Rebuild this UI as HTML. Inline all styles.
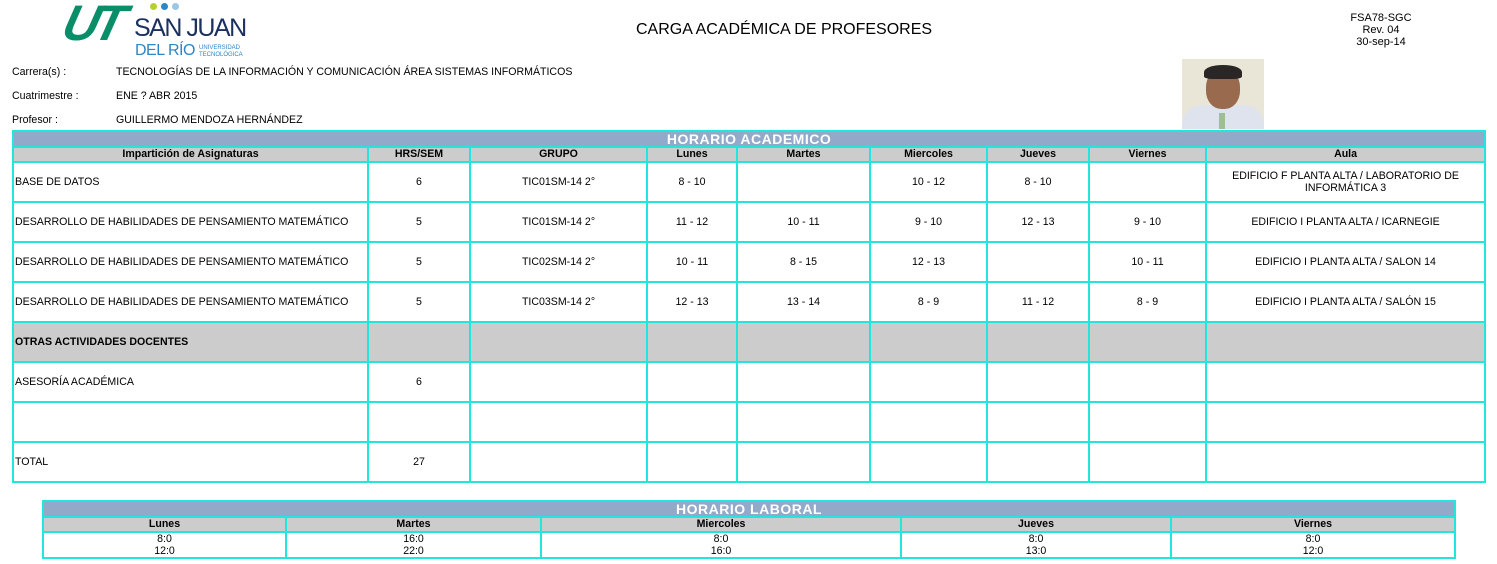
<!DOCTYPE html>
<html><head><meta charset="utf-8"><style>
body{margin:0;width:1497px;height:564px;background:#fff;font-family:"Liberation Sans",Arial,sans-serif;color:#000;position:relative;overflow:hidden}
.a{position:absolute;white-space:nowrap}
table{border-collapse:collapse;table-layout:fixed;position:absolute}
td{border:2px solid #22e6de;font-size:10.6px;text-align:center;padding:0;overflow:hidden}
.t{background:#93a9c9;color:#fff;font-weight:bold;font-size:14px;height:14px;line-height:14px;letter-spacing:0.5px}
.h td{background:#cccccc;font-weight:bold;height:13px;line-height:13px}
.r td{height:38px;line-height:12px}
.r td.l{text-align:left;padding-left:1px}
.g td{background:#cccccc}
</style></head><body>
<div class="a" style="left:64px;top:-6px;font-size:50px;font-weight:bold;font-style:italic;color:#0a8e6a;letter-spacing:-5px;transform:skewX(-14deg)">UT</div>
<div class="a" style="left:150px;top:3px;width:7px;height:7px;border-radius:50%;background:#b7cf2a"></div>
<div class="a" style="left:161px;top:3px;width:7px;height:7px;border-radius:50%;background:#2d86c6"></div>
<div class="a" style="left:172px;top:3px;width:7px;height:7px;border-radius:50%;background:#9cc6e3"></div>
<div class="a" style="left:134px;top:14px;font-size:25px;color:#1d3160;letter-spacing:-1.5px">SAN JUAN</div>
<div class="a" style="left:135px;top:42px;font-size:16px;color:#2d86c6;letter-spacing:-0.5px">DEL RÍO</div>
<div class="a" style="left:199px;top:45px;font-size:6px;line-height:7px;color:#2d86c6">UNIVERSIDAD<br>TECNOLÓGICA</div>
<div class="a" style="left:636px;top:21px;font-size:16px">CARGA ACADÉMICA DE PROFESORES</div>
<div class="a" style="left:1340px;top:12px;font-size:11px;line-height:12px;text-align:center;width:82px">FSA78-SGC<br>Rev. 04<br>30-sep-14</div>
<div class="a" style="left:12px;top:66px;font-size:10.6px">Carrera(s) :</div>
<div class="a" style="left:116px;top:66px;font-size:10.6px">TECNOLOGÍAS DE LA INFORMACIÓN Y COMUNICACIÓN ÁREA SISTEMAS INFORMÁTICOS</div>
<div class="a" style="left:12px;top:90px;font-size:10.6px">Cuatrimestre :</div>
<div class="a" style="left:116px;top:90px;font-size:10.6px">ENE ? ABR 2015</div>
<div class="a" style="left:12px;top:114px;font-size:10.6px">Profesor :</div>
<div class="a" style="left:116px;top:114px;font-size:10.6px">GUILLERMO MENDOZA HERNÁNDEZ</div>
<div class="a" style="left:1182px;top:59px;width:82px;height:70px;background:#e9e6d8;overflow:hidden">
<div style="position:absolute;left:0;top:46px;width:82px;height:30px;background:#dfe3ee;border-radius:20px 20px 0 0"></div>
<div style="position:absolute;left:24px;top:10px;width:34px;height:40px;background:#9a6a4e;border-radius:45%"></div>
<div style="position:absolute;left:22px;top:6px;width:38px;height:14px;background:#2a2625;border-radius:50% 50% 20% 20%"></div>
<div style="position:absolute;left:37px;top:54px;width:6px;height:16px;background:#9fbf8f"></div>
</div>
<table style="left:12px;top:130px;width:1474px">
<colgroup><col style="width:355px"><col style="width:102px"><col style="width:177px"><col style="width:90px"><col style="width:133px"><col style="width:117px"><col style="width:102px"><col style="width:117px"><col style="width:279px"></colgroup>
<tr><td colspan="9" class="t">HORARIO ACADEMICO</td></tr>
<tr class="h"><td>Impartición de Asignaturas</td><td>HRS/SEM</td><td>GRUPO</td><td>Lunes</td><td>Martes</td><td>Miercoles</td><td>Jueves</td><td>Viernes</td><td>Aula</td></tr>
<tr class="r"><td class="l">BASE DE DATOS</td><td>6</td><td>TIC01SM-14 2°</td><td>8 - 10</td><td></td><td>10 - 12</td><td>8 - 10</td><td></td><td>EDIFICIO F PLANTA ALTA / LABORATORIO DE INFORMÁTICA 3</td></tr>
<tr class="r"><td class="l">DESARROLLO DE HABILIDADES DE PENSAMIENTO MATEMÁTICO</td><td>5</td><td>TIC01SM-14 2°</td><td>11 - 12</td><td>10 - 11</td><td>9 - 10</td><td>12 - 13</td><td>9 - 10</td><td>EDIFICIO I PLANTA ALTA / ICARNEGIE</td></tr>
<tr class="r"><td class="l">DESARROLLO DE HABILIDADES DE PENSAMIENTO MATEMÁTICO</td><td>5</td><td>TIC02SM-14 2°</td><td>10 - 11</td><td>8 - 15</td><td>12 - 13</td><td></td><td>10 - 11</td><td>EDIFICIO I PLANTA ALTA / SALON 14</td></tr>
<tr class="r"><td class="l">DESARROLLO DE HABILIDADES DE PENSAMIENTO MATEMÁTICO</td><td>5</td><td>TIC03SM-14 2°</td><td>12 - 13</td><td>13 - 14</td><td>8 - 9</td><td>11 - 12</td><td>8 - 9</td><td>EDIFICIO I PLANTA ALTA / SALÓN 15</td></tr>
<tr class="r g"><td class="l"><b>OTRAS ACTIVIDADES DOCENTES</b></td><td></td><td></td><td></td><td></td><td></td><td></td><td></td><td></td></tr>
<tr class="r"><td class="l">ASESORÍA ACADÉMICA</td><td>6</td><td></td><td></td><td></td><td></td><td></td><td></td><td></td></tr>
<tr class="r"><td class="l"></td><td></td><td></td><td></td><td></td><td></td><td></td><td></td><td></td></tr>
<tr class="r"><td class="l">TOTAL</td><td>27</td><td></td><td></td><td></td><td></td><td></td><td></td><td></td></tr>
</table>
<table style="left:42px;top:500px;width:1414px">
<colgroup><col style="width:243px"><col style="width:255px"><col style="width:360px"><col style="width:270px"><col style="width:284px"></colgroup>
<tr><td colspan="5" class="t">HORARIO LABORAL</td></tr>
<tr class="h"><td>Lunes</td><td>Martes</td><td>Miercoles</td><td>Jueves</td><td>Viernes</td></tr>
<tr><td style="line-height:12px;height:24px">8:0<br>12:0</td><td style="line-height:12px">16:0<br>22:0</td><td style="line-height:12px">8:0<br>16:0</td><td style="line-height:12px">8:0<br>13:0</td><td style="line-height:12px">8:0<br>12:0</td></tr>
</table>
</body></html>
